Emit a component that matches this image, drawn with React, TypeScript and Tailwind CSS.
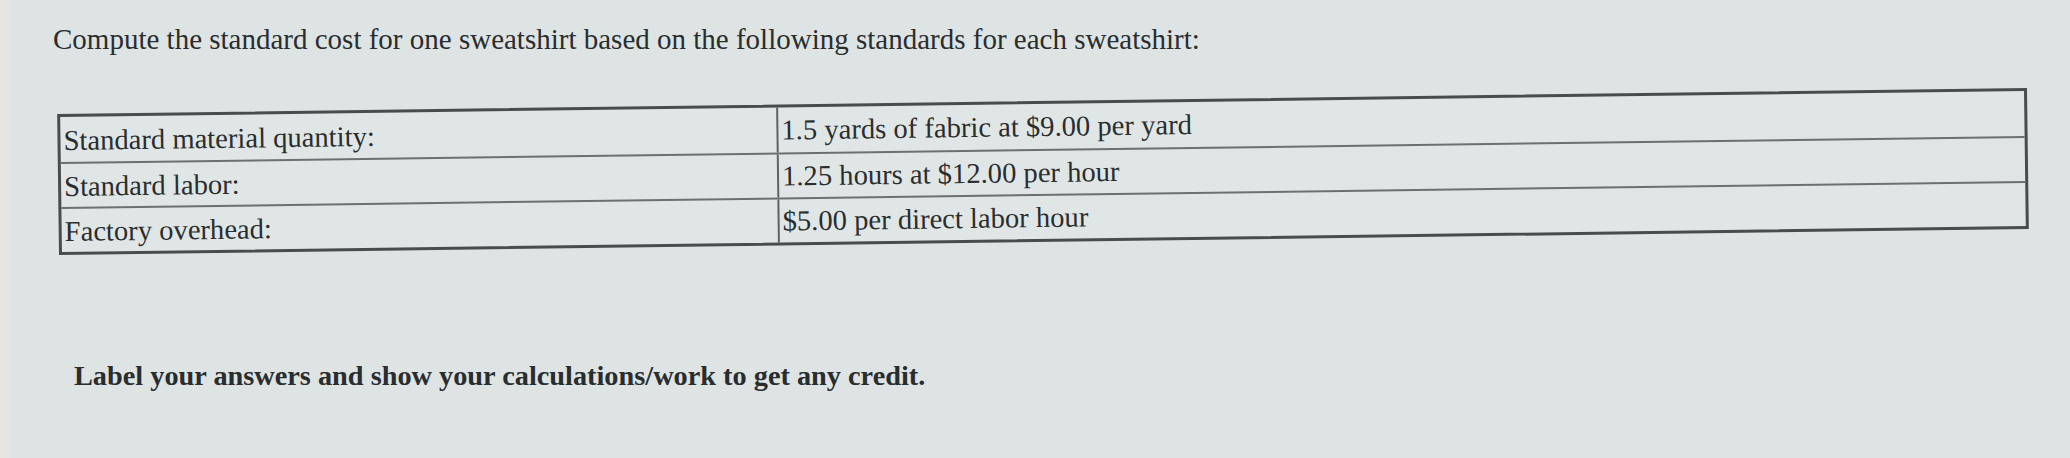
import React from "react";

const rows: [string, string][] = [
  ["Standard material quantity:", "1.5 yards of fabric at $9.00 per yard"],
  ["Standard labor:", "1.25 hours at $12.00 per hour"],
  ["Factory overhead:", "$5.00 per direct labor hour"],
];

export default function App() {
  return (
    <div
      className="w-[2070px] h-[458px] flex bg-[#dee4e4] text-[#2a2d2e] overflow-hidden"
      style={{ fontFamily: '"Liberation Serif", "Times New Roman", serif' }}
    >
      <div className="w-[10px] shrink-0 bg-[#e6e5e1]" />
      <div className="flex-1 flex flex-col">
        <div className="pl-[43px] pt-[21px] text-[29px] leading-[36px]">
          Compute the standard cost for one sweatshirt based on the following standards for each sweatshirt:
        </div>
        <div className="pl-[48px] pt-[44px]">
          <div className="w-[1970px] -rotate-[0.76deg] border-[3px] border-[#474c4d] bg-[#e0e6e6]">
            {rows.map(([a, b], i) => (
              <div
                key={i}
                className={`flex h-[45px] ${i > 0 ? "border-t-2 border-[#6b7071]" : ""}`}
              >
                <div className="w-[718px] shrink-0 border-r-2 border-[#5d6263] pl-[3px] flex items-center text-[28.6px] pt-[4px]">
                  {a}
                </div>
                <div className="flex-1 pl-[3px] flex items-center text-[28.6px] pt-[2px]">{b}</div>
              </div>
            ))}
          </div>
        </div>
        <div className="pl-[64px] pt-[116px] text-[28.3px] font-bold leading-[36px]">
          Label your answers and show your calculations/work to get any credit.
        </div>
      </div>
    </div>
  );
}
